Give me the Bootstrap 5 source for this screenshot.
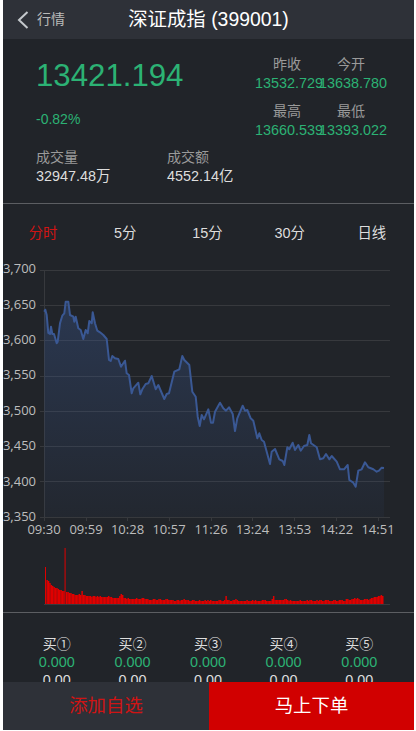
<!DOCTYPE html>
<html lang="zh-CN">
<head>
<meta charset="utf-8">
<meta name="viewport" content="width=device-width, initial-scale=1">
<title>深证成指</title>
<link rel="stylesheet" href="https://cdn.jsdelivr.net/npm/bootstrap@5.3.0/dist/css/bootstrap.min.css">
<style>
html,body{height:100%;margin:0;background:#fff;overflow:hidden}
body{font-family:"Liberation Sans","Noto Sans CJK SC",sans-serif;font-size:14px}
.app-frame{margin:0 2px 1px 3px;height:730px;background:#212429;color:#ddd;overflow:hidden}
.top-bar{height:39px;background:#2e3138;flex:none}
.back-link{left:14px;top:0;height:39px;color:#bbb;font-size:14px;text-decoration:none}
.page-title{font-size:19.4px;color:#fff;line-height:39px;margin:0;font-weight:400}
.stat-panel{height:165px;flex:none;border-bottom:1px solid #5c5e62;padding:0 0 0 33px}
.price-now{font-size:31.2px;line-height:36px;color:#2cb274;margin:19px 0 0}
.price-pct{font-size:14px;line-height:18px;color:#2cb274;margin:16px 0 0}
.vol-block{width:131px;line-height:19px;margin-top:20px}
.muted-label{color:#9a9a9a;font-size:14px}
.vol-val{color:#ddd;font-size:14.4px}
.quote-grid{margin:16px 0 0 0;width:128px;flex:none;position:absolute;left:252px;top:0}
.quote-cell{width:64px;text-align:center;line-height:19px;height:47px;white-space:nowrap}
.quote-val{color:#2cb274;font-size:14.4px;text-align:left;display:block}
.period-row{height:59px;flex:none;margin:0 1px 0 -1px;color:#ddd;font-size:14.4px}
.period-row>div{padding:0;text-align:center}
.period-on{color:#d01414}
.chart-box{height:349px;flex:none;display:block}
.chart-box text{font-family:"Open Sans",sans-serif;font-size:13px;fill:#bdbdbd}
.book-panel{flex:1 1 auto;min-height:0;overflow:hidden;border-top:1px solid #5c5e62;padding:22px 17px 0 16px}
.book-col{line-height:18px;text-align:center;padding:0;font-size:14px;color:#ddd}
.book-num{font-size:14.4px}
.book-green{color:#2cb274}
.foot-bar{height:48px;flex:none;font-size:18px}
.foot-add{background:#2e3138;color:#d01414;width:206px;border:0;border-radius:0;font-size:18.4px}
.foot-buy{background:#d10000;color:#fff;border:0;border-radius:0;font-size:18.4px}
.foot-add:hover,.foot-add:focus{background:#2e3138;color:#d01414}
.foot-buy:hover,.foot-buy:focus{background:#d10000;color:#fff}
</style>
</head>
<body>
<div class="app-frame d-flex flex-column">
  <header class="top-bar position-relative text-center">
    <a href="#" class="back-link position-absolute d-flex align-items-center gap-2">
      <svg width="12" height="18" viewBox="0 0 12 18" aria-hidden="true"><path d="M10.5 1 L2 9 L10.5 17" fill="none" stroke="#c4c8cc" stroke-width="2"/></svg>
      <span>行情</span>
    </a>
    <h1 class="page-title">深证成指 (399001)</h1>
  </header>

  <section class="stat-panel position-relative">
    <div class="price-now">13421.194</div>
    <div class="price-pct">-0.82%</div>
    <div class="d-flex">
      <div class="vol-block"><div class="muted-label">成交量</div><div class="vol-val">32947.48万</div></div>
      <div class="vol-block"><div class="muted-label">成交额</div><div class="vol-val">4552.14亿</div></div>
    </div>
    <div class="quote-grid d-flex flex-wrap">
      <div class="quote-cell"><div class="muted-label">昨收</div><span class="quote-val">13532.729</span></div>
      <div class="quote-cell"><div class="muted-label">今开</div><span class="quote-val">13638.780</span></div>
      <div class="quote-cell"><div class="muted-label">最高</div><span class="quote-val">13660.539</span></div>
      <div class="quote-cell"><div class="muted-label">最低</div><span class="quote-val">13393.022</span></div>
    </div>
  </section>

  <nav class="period-row row row-cols-5 align-items-center">
    <div class="period-on">分时</div><div>5分</div><div>15分</div><div>30分</div><div>日线</div>
  </nav>

  <svg class="chart-box" width="411" height="349" viewBox="3 263 411 349" aria-label="分时走势图">
    <defs>
      <linearGradient id="areaFill" x1="0" y1="0" x2="0" y2="1">
        <stop offset="0" stop-color="#3b5a96" stop-opacity=".36"/>
        <stop offset="1" stop-color="#3b5a96" stop-opacity=".06"/>
      </linearGradient>
    </defs>
    <g stroke="#37393d" stroke-width="1" fill="none">
      <path d="M44 270.5H390M44 305.5H390M44 340.5H390M44 376.5H390M44 411.5H390M44 446.5H390M44 481.5H390"/>
      <path d="M40 270.5H44M40 305.5H44M40 340.5H44M40 376.5H44M40 411.5H44M40 446.5H44M40 481.5H44M40 517.5H44"/>
      <path d="M44.5 270V521M86.5 517V521M127.5 517V521M169.5 517V521M211.5 517V521M252.5 517V521M294.5 517V521M336.5 517V521M378.5 517V521M44 517.5H390"/>
      <path d="M44 604.5H390"/>
    </g>
    <g text-anchor="end">
      <text x="36" y="273">13,700</text><text x="36" y="308.700">13,650</text><text x="36" y="344">13,600</text><text x="36" y="379.300">13,550</text>
      <text x="36" y="414.500">13,500</text><text x="36" y="450">13,450</text><text x="36" y="485.500">13,400</text><text x="36" y="520.700">13,350</text>
    </g>
    <g text-anchor="middle">
      <text x="44" y="534">09:30</text><text x="86" y="534">09:59</text><text x="127.500" y="534">10:28</text><text x="169" y="534">10:57</text><text x="211" y="534">11:26</text><text x="252.500" y="534">13:24</text><text x="294.500" y="534">13:53</text><text x="336.500" y="534">14:22</text><text x="378" y="534">14:51</text>
    </g>
    <polygon id="priceArea" fill="url(#areaFill)" points=""/>
    <polyline id="priceLine" fill="none" stroke="#3a5894" stroke-width="2" stroke-linejoin="round" points="44.3,311.7 45.3,309.7 46.7,315 48.3,333 50,334 51,326.7 52.3,334 54,334 56.7,343.3 57.7,341.7 60,323.3 62.3,315.7 64.3,313.3 65.7,301.7 68.3,301.7 70,315 73.3,316.7 74.3,321.7 75.7,316.7 78.3,328.3 80.7,330 83.3,339 85.7,330 87.7,333.3 89.3,321 91.7,323.3 92.7,312.3 95,323.3 97.3,330.7 100,332.3 103.3,335 106.7,339 109,360 110.7,361 112.3,356 115,358.3 118.3,359 121,366.7 123.3,363.3 125,360.7 126.7,373.3 129,375 131.7,393.3 133.3,388.3 138.3,382.7 140.3,394.3 142.3,389.3 145.7,384 148.3,383.3 151.7,376 155.7,389.3 158.3,385 164.3,399 166.7,394 169,393.3 174.3,371.7 179.3,369.3 182.3,356 184.3,360 189.3,365 192.3,391.7 195.7,396.7 197.7,416.7 199.7,426 201.700,415 204,419.3 208.3,409.3 211,422.7 213,422.7 215,411.7 220,402.7 223.3,408.3 226,410.7 229,407.3 232.7,414 235,431 237.3,418.3 242.7,405.7 245,410.7 247.3,410 250.7,418.3 253.3,420.7 257.3,438.3 259.3,433.3 261.7,440 264,441.7 270,464 271.7,451.7 275,449 279.3,459.3 282.7,461 284.3,465 287.3,447.3 289.3,449.3 292.7,442.7 295,450 298.3,445 300.7,450.7 304,446 307.3,445 309.3,435 311,443.3 316.7,447.3 320,459.3 323.3,458.3 326,454 329.3,459.3 331.7,456 336.7,461.7 340,469.3 344,469.3 347.7,465 349.3,480 353.3,482.7 355.7,486.7 358.3,470.7 361.7,469.3 365,462.3 368.3,467.3 373.3,469.3 376.7,471.7 379,470.7 381.7,467.7 384,468"/>
    <g id="volBars" fill="#e00000"></g>
  </svg>

  <section class="book-panel">
    <div class="row row-cols-5 g-0">
      <div class="book-col col"><div>买①</div><div class="book-num book-green">0.000</div><div class="book-num">0.00</div></div>
      <div class="book-col col"><div>买②</div><div class="book-num book-green">0.000</div><div class="book-num">0.00</div></div>
      <div class="book-col col"><div>买③</div><div class="book-num book-green">0.000</div><div class="book-num">0.00</div></div>
      <div class="book-col col"><div>买④</div><div class="book-num book-green">0.000</div><div class="book-num">0.00</div></div>
      <div class="book-col col"><div>买⑤</div><div class="book-num book-green">0.000</div><div class="book-num">0.00</div></div>
    </div>
  </section>

  <footer class="foot-bar d-flex">
    <button type="button" class="btn foot-add flex-none">添加自选</button>
    <button type="button" class="btn foot-buy flex-grow-1">马上下单</button>
  </footer>
</div>
<script>
var line=document.getElementById('priceLine').getAttribute('points');
document.getElementById('priceArea').setAttribute('points','44.3,517 '+line+' 384,517');
var v=[37,23,22,20,18,17,16,15,15,14,13,13,12,12,56,11,11,10,10,9,9,8,8,8,9,8,12,8,8,7,7,7,7,6,7,7,6,7,6,7,6,6,6,6,6,7,6,6,5,5,5,5,5,7,9,8,5,5,4,5,4,4,4,4,4,5,4,4,4,5,5,4,4,4,3,3,3,4,4,3,3,4,4,3,3,3,4,4,3,3,3,3,2,2,3,3,2,3,3,4,3,3,3,2,2,3,3,2,2,2,3,2,2,2,3,2,3,2,3,2,2,2,2,2,3,3,2,2,3,7,3,3,2,2,3,3,4,3,2,2,2,2,2,2,3,2,2,2,3,2,3,2,2,2,2,3,3,3,2,2,2,2,4,7,3,3,3,3,3,3,3,4,4,3,2,3,2,2,2,2,2,2,3,2,2,2,2,3,2,3,3,2,2,2,3,2,3,3,2,2,3,3,3,2,2,2,3,3,2,2,3,3,3,2,2,4,4,3,3,4,4,5,4,5,4,3,3,3,4,4,4,3,4,5,5,6,6,6,7,7,8,7];
var svg='http://www.w3.org/2000/svg',g=document.getElementById('volBars'),step=337/(v.length-1);
v.forEach(function(h,i){var t=h>30?h:h+1,r=document.createElementNS(svg,'rect');r.setAttribute('x',(45+i*step).toFixed(2));r.setAttribute('y',604-t);r.setAttribute('width',h>30?1:1.5);r.setAttribute('height',t);g.appendChild(r);});
</script>
<script src="https://cdn.jsdelivr.net/npm/bootstrap@5.3.0/dist/js/bootstrap.bundle.min.js"></script>
</body>
</html>
